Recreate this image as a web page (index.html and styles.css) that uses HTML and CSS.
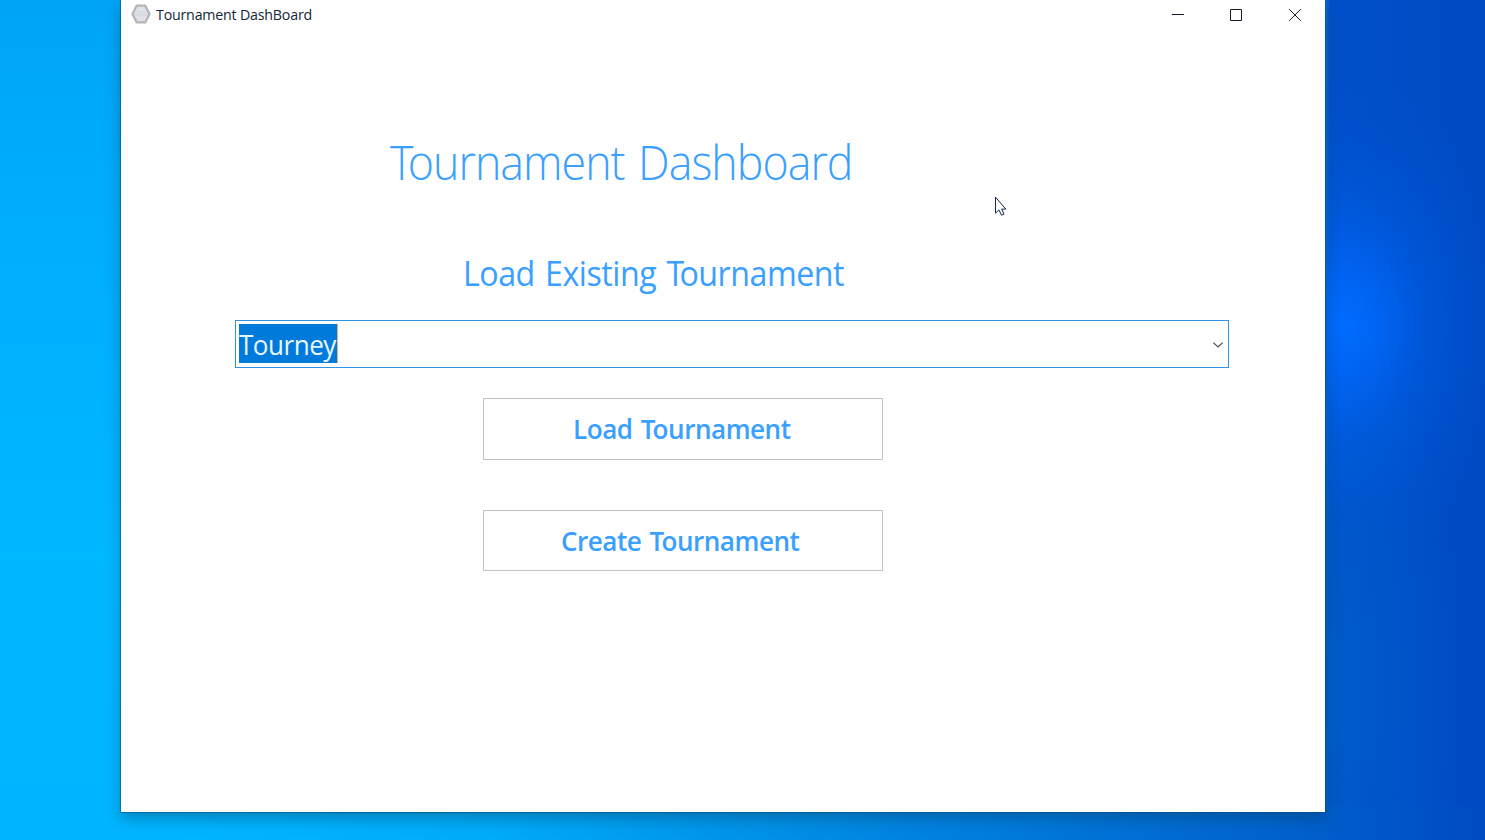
FILE: index.html
```html
<!DOCTYPE html>
<html lang="en">
<head>
<meta charset="utf-8">
<title>Tournament DashBoard</title>
<link rel="stylesheet" href="styles.css">
</head>
<body class="desktop">
<main class="window">
  <header class="titlebar">
    <svg class="app-icon" width="20" height="20" viewBox="0 0 20 20"><path d="M5.7 1.7h8.6L18.5 10l-4.2 8.3H5.7L1.5 10z" fill="#dfe2ea" stroke="#b7b5b8" stroke-width="2.3"/><path d="M4 8h12M4 11h12" stroke="#d0d3da"/></svg>
    <span class="app-name">Tournament DashBoard</span>
    <nav class="controls">
      <svg width="12" height="12" viewBox="0 0 12 12"><path d="M0 5.5h12"/></svg>
      <svg width="12" height="12" viewBox="0 0 12 12"><path d="M.5.5h11v11H.5z"/></svg>
      <svg width="12" height="12" viewBox="0 0 12 12"><path d="M.2.2l11.6 11.6M11.8.2L.2 11.8"/></svg>
    </nav>
  </header>
  <h1 class="title"><span class="kern">T</span>ournament Dashboard</h1>
  <h2 class="subtitle">Load Existing <span class="kern">T</span>ournament</h2>
  <div class="combo">
    <span class="selection"><span class="value">Tourney</span></span>
    <svg class="chevron" width="12" height="8" viewBox="0 0 12 8"><path d="M1.3 1.6L6 6l4.7-4.4"/></svg>
  </div>
  <div class="actions">
    <button class="action"><span class="load">Load <span class="kern">T</span>ournament</span></button>
    <button class="action"><span class="create">Create <span class="kern">T</span>ournament</span></button>
  </div>
</main>
<svg class="cursor" width="14" height="22" viewBox="0 0 14 22"><path d="M1.5 1.2v16l3.4-3.3 2.6 5.3 2.5-1.1-2.4-5h4.2z"/></svg>
</body>
</html>
```
FILE: styles.css
```css
* { box-sizing: border-box; }
.desktop {
  margin: 0;
  width: 1485px;
  height: 840px;
  overflow: hidden;
  padding-left: 121px;
  font-family: "Open Sans", "Noto Sans", sans-serif;
  background:
    radial-gradient(ellipse 170px 250px at 1345px 325px, #006cff 0%, #0068fad0 20%, #0060ea80 45%, #0056d838 75%, transparent 100%),
    radial-gradient(ellipse 140px 400px at 1325px 690px, #005ccaff 0%, #005ccaa0 40%, transparent 100%) 0 0 / 1485px 805px no-repeat,
    linear-gradient(90deg, transparent 1320px, #0050ca 1330px, #004ac3 1485px) 0 0 / 1485px 805px no-repeat,
    linear-gradient(90deg, transparent 130px, #00b5ff 150px, #00acf8 480px, #0092e8 750px, #007bdc 1000px, #0060cc 1300px, #004ac2 1485px) 0 805px / 1485px 35px no-repeat,
    linear-gradient(180deg, #00a4f6 0, #00acfc 180px, #00b2ff 380px, #00b8ff 550px, #00b5ff 840px);
}
.window {
  width: 1204px;
  height: 812px;
  background: #fefefe;
  box-shadow: 0 0 0 1px #064b7580, 0 6px 14px #00405f70;
  display: flex;
  flex-direction: column;
  align-items: flex-start;
}
.titlebar {
  width: 100%;
  height: 30px;
  padding: 0 24px 2px 10px;
  display: flex;
  align-items: center;
}
.app-name {
  margin-left: 5px;
  padding-top: 2px;
  font-size: 14.5px;
  line-height: 20px;
  letter-spacing: -.2px;
  color: #142638;
  white-space: nowrap;
  transform: scaleX(.98);
  transform-origin: left;
}
.controls {
  margin-left: auto;
  padding-top: 2px;
  display: flex;
  gap: 46.5px;
}
.controls svg { fill: none; stroke: #171725; stroke-width: 1; }
.controls svg:nth-child(2) { margin: 0 .5px 0 -.5px; }
.title, .subtitle { color: #3aa0ff; white-space: nowrap; transform-origin: left; }
.title {
  margin: 100px 0 0 269px;
  font-size: 47px;
  line-height: 64px;
  font-weight: 300;
  letter-spacing: -1px;
  word-spacing: 3px;
  transform: scaleX(.951);
}
.title .kern { letter-spacing: -6px; }
.subtitle {
  margin: 56px 0 0 342px;
  font-size: 34px;
  line-height: 46px;
  font-weight: 400;
  letter-spacing: -.5px;
  word-spacing: 2.5px;
  transform: scaleX(.946);
}
.subtitle .kern { letter-spacing: -5px; }
.combo {
  margin: 24px 0 0 114px;
  width: 994px;
  height: 48px;
  border: 1px solid #2f91e6;
  padding: 3px 4px 4px 3px;
  display: flex;
  align-items: center;
  justify-content: space-between;
}
.selection {
  height: 39px;
  width: 99px;
  background: #007bdc;
  border-right: 1px solid #d4ae88;
  color: #e8f5ff;
  font-size: 27px;
  line-height: 41px;
  letter-spacing: -.5px;
  white-space: nowrap;
}
.value {
  display: block;
  transform: scaleX(.965);
  transform-origin: left;
}
.chevron { margin-top: 3px; fill: none; stroke: #454c5b; stroke-width: 1.2; }
.actions {
  margin: 30px 0 0 362px;
  display: flex;
  flex-direction: column;
  gap: 50px;
}
.action {
  width: 400px;
  height: 61.5px;
  padding: 1px 0 0;
  border: 1px solid #c4c3c4;
  background: #fefefe;
  color: #3aa0ff;
  font: 600 27px/36px "Open Sans", "Noto Sans", sans-serif;
  letter-spacing: -.5px;
  text-align: left;
  white-space: nowrap;
}
.load, .create {
  display: inline-block;
  word-spacing: 2px;
  transform: scaleX(.966);
  transform-origin: left;
}
.action .kern { letter-spacing: -3px; }
.load { margin-left: 89px; }
.create { margin-left: 77px; }
.cursor {
  position: absolute;
  left: 994px;
  top: 196px;
  fill: #fff;
  stroke: #122b48;
  stroke-width: 1;
}
```
